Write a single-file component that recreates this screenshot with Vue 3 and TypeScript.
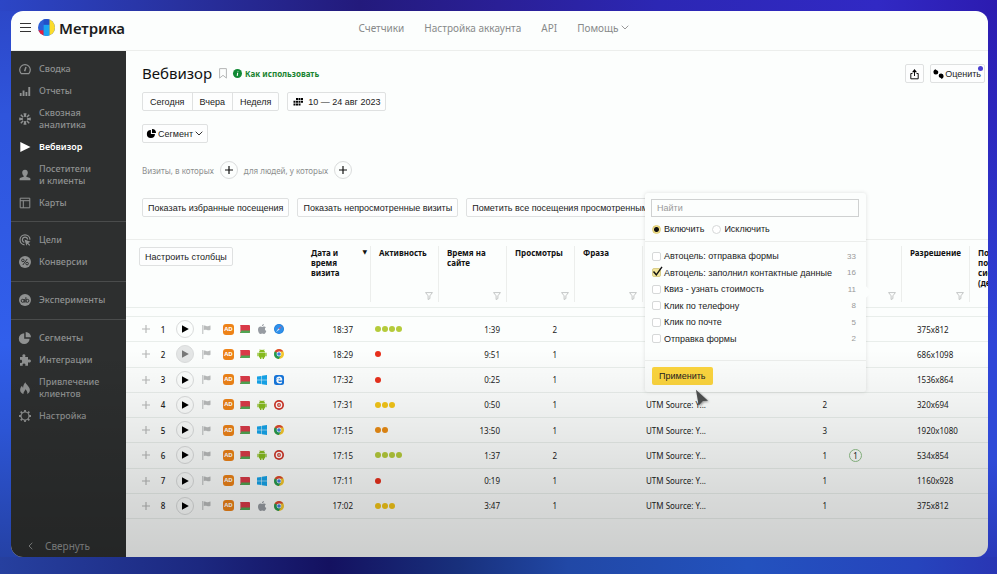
<script setup lang="ts">
import { ref } from 'vue'

type Os = 'apple' | 'android' | 'windows'
type Browser = 'safari' | 'chrome' | 'edge' | 'opera'

interface NavItem {
  label: string
  icon: string
}

interface Visit {
  id: number
  time: string
  os: Os
  browser: Browser
  activity: number
  color: string
  duration: string
  views: number
  source: string
  visits: string
  goals: string
  resolution: string
}

interface Goal {
  name: string
  count: number
}

const menu: NavItem[][] = [
  [
    { label: 'Сводка', icon: 'gauge' },
    { label: 'Отчеты', icon: 'bars' },
    { label: 'Сквозная\nаналитика', icon: 'burst' },
    { label: 'Вебвизор', icon: 'play' },
    { label: 'Посетители\nи клиенты', icon: 'person' },
    { label: 'Карты', icon: 'layout' },
  ],
  [
    { label: 'Цели', icon: 'target' },
    { label: 'Конверсии', icon: 'percent' },
  ],
  [{ label: 'Эксперименты', icon: 'ab' }],
  [
    { label: 'Сегменты', icon: 'pie' },
    { label: 'Интеграции', icon: 'puzzle' },
    { label: 'Привлечение\nклиентов', icon: 'fire' },
    { label: 'Настройка', icon: 'gear' },
  ],
]
const current = 'Вебвизор'

const green = '#b5cb3b'
const red = '#e8301c'
const yellow = '#f3c518'
const orange = '#ea8c14'

const visits: Visit[] = [
  { id: 1, time: '18:37', os: 'apple', browser: 'safari', activity: 4, color: green, duration: '1:39', views: 2, source: '', visits: '', goals: '', resolution: '375x812' },
  { id: 2, time: '18:29', os: 'android', browser: 'chrome', activity: 1, color: red, duration: '9:51', views: 1, source: '', visits: '', goals: '', resolution: '686x1098' },
  { id: 3, time: '17:32', os: 'windows', browser: 'edge', activity: 1, color: red, duration: '0:25', views: 1, source: '', visits: '', goals: '', resolution: '1536x864' },
  { id: 4, time: '17:31', os: 'android', browser: 'opera', activity: 3, color: yellow, duration: '0:50', views: 1, source: 'UTM Source: Y...', visits: '2', goals: '', resolution: '320x694' },
  { id: 5, time: '17:15', os: 'windows', browser: 'chrome', activity: 2, color: orange, duration: '13:50', views: 1, source: 'UTM Source: Y...', visits: '3', goals: '', resolution: '1920x1080' },
  { id: 6, time: '17:15', os: 'android', browser: 'opera', activity: 4, color: green, duration: '1:37', views: 2, source: 'UTM Source: Y...', visits: '1', goals: '1', resolution: '534x854' },
  { id: 7, time: '17:11', os: 'windows', browser: 'chrome', activity: 1, color: red, duration: '0:19', views: 1, source: 'UTM Source: Y...', visits: '1', goals: '', resolution: '1160x928' },
  { id: 8, time: '17:02', os: 'apple', browser: 'chrome', activity: 3, color: yellow, duration: '3:47', views: 1, source: 'UTM Source: Y...', visits: '1', goals: '', resolution: '375x812' },
]
const watched = 2

const columns = [
  { label: 'Дата и\nвремя\nвизита', filter: false, sorted: true },
  { label: 'Активность', filter: true },
  { label: 'Время на\nсайте', filter: true },
  { label: 'Просмотры', filter: true },
  { label: 'Фраза', filter: true },
  { label: '', filter: false },
  { label: '', filter: false },
  { label: '', filter: true },
  { label: 'Разрешение', filter: true },
  { label: 'Последняя\nпоисковая\nсистема\n(детально)', filter: false },
]

const goals: Goal[] = [
  { name: 'Автоцель: отправка формы', count: 33 },
  { name: 'Автоцель: заполнил контактные данные', count: 16 },
  { name: 'Квиз - узнать стоимость', count: 11 },
  { name: 'Клик по телефону', count: 8 },
  { name: 'Клик по почте', count: 5 },
  { name: 'Отправка формы', count: 2 },
]
const checked = ref<string[]>(['Автоцель: заполнил контактные данные'])
const mode = ref('include')
const query = ref('')
</script>

<template>
  <div class="backdrop">
    <div class="window">
      <header class="top">
        <div class="brand">
          <button class="burger" type="button" aria-label="Меню"><i></i><i></i><i></i></button>
          <svg class="logo" viewBox="0 0 18 18" aria-hidden="true">
            <defs><clipPath id="disc"><circle cx="9" cy="9" r="9" /></clipPath></defs>
            <g clip-path="url(#disc)">
              <rect width="18" height="18" fill="#2c5fd6" />
              <rect x="12" width="6" height="18" fill="#fbdc2c" />
              <rect y="12" width="6" height="6" fill="#e8203c" />
              <rect x="6" y="6" width="6" height="12" fill="#19a4f2" />
              <rect x="6" width="6" height="6" fill="#2350c8" />
            </g>
          </svg>
          <span class="name">Метрика</span>
        </div>
        <nav class="links">
          <a href="#">Счетчики</a>
          <a href="#">Настройка аккаунта</a>
          <a href="#">API</a>
          <a href="#">Помощь<svg class="chev" viewBox="0 0 8 5"><path d="M.7.7 4 4 7.300.7" /></svg></a>
        </nav>
      </header>

      <div class="body">
        <aside class="side">
          <ul v-for="(group, g) in menu" :key="g">
            <li v-for="item in group" :key="item.label">
              <a href="#" :class="{ active: item.label === current }">
                <svg class="mi" viewBox="0 0 12 12" aria-hidden="true">
                  <g v-if="item.icon === 'gauge'" class="ln"><path d="M2.200 10.600A5.300 5.300 0 1 1 9.800 10.600Z" stroke-width="1.200" /><path d="M5.600 8.200 7 4" stroke-width="1.500" /></g>
                  <g v-else-if="item.icon === 'bars'"><path d="M.8 8h1.800v3H.8zM3.600 5.500h1.900V11H3.600zM6.500 7h1.800v4H6.500zM9.300 2h1.900v9H9.300z" /></g>
                  <g v-else-if="item.icon === 'burst'"><path d="M4.500.2h3L6.800 4H5.200zM4.500 11.800h3L6.800 8H5.200zM.2 4.500v3L4 6.800V5.200zM11.800 4.500v3L8 6.800V5.200z" /><path class="ln" d="M1.800 1.800l2.400 2.400M7.800 7.800l2.400 2.400M10.200 1.800 7.800 4.200M4.200 7.800l-2.400 2.400" stroke-width="1.500" /></g>
                  <path v-else-if="item.icon === 'play'" d="M1.300 1 11.500 6 1.300 11z" />
                  <path v-else-if="item.icon === 'person'" d="M6 .7c1.800 0 2.800 1.200 2.800 2.900 0 1.500-.7 2.700-1.500 3.300v.8l3.100 1c.7.2 1 .7 1 1.400v1.200H.6v-1.200c0-.7.3-1.200 1-1.400l3.100-1v-.8C3.900 6.300 3.200 5.100 3.200 3.600 3.200 1.900 4.200.7 6 .7z" />
                  <g v-else-if="item.icon === 'layout'" class="ln"><path d="M1.200 1.200h9.600v9.600H1.200zM1.200 3.700h9.600M4.300 3.700v7.100" /></g>
                  <g v-else-if="item.icon === 'target'"><g class="ln"><path d="M5.500 10.800A5 5 0 1 1 11 5.600" stroke-width="1.200" /><path d="M5.300 8.300A2.600 2.600 0 1 1 8.600 5.500" stroke-width="1.200" /></g><path d="m5.500 5.500 6 2.300-2.300 1.100 2 2-.9.900-2-2-.9 2z" /></g>
                  <g v-else-if="item.icon === 'percent'"><circle cx="6" cy="6" r="6" /><g class="cut"><circle cx="3.900" cy="4.400" r="1.300" /><circle cx="8.100" cy="7.600" r="1.300" /><path d="M8.200 3 3.800 9" /></g></g>
                  <g v-else-if="item.icon === 'ab'"><circle cx="6" cy="6" r="6" /><g class="cut"><circle cx="3.700" cy="6.800" r="1.500" /><path d="M5.300 5v3.600M6.900 3.200v5.400" /><circle cx="8.400" cy="6.800" r="1.500" /></g></g>
                  <g v-else-if="item.icon === 'pie'"><path d="M5.200 1.300v5.500h5.400A5.400 5.400 0 1 1 5.200 1.300z" /><path d="M6.700 0A5.300 5.300 0 0 1 12 5.300H6.700z" /></g>
                  <path v-else-if="item.icon === 'puzzle'" d="M1 3h2.700C3 1.500 3.500.2 4.900.2S6.800 1.500 6.100 3H9v2.800c1.500-.7 2.900-.2 2.900 1.200S10.500 8.900 9 8.200v3.600H6.200c.6-1.200.1-2.200-1.200-2.200s-1.800 1-1.200 2.200H1V8.700c1.300.6 2.100 0 2.100-1.300S2.300 5.500 1 6z" />
                  <path v-else-if="item.icon === 'fire'" d="M6.400.2C7 2.600 10.900 4.500 10.900 8c0 2-1.100 3.300-2.700 3.900.6-1.700-.4-3.300-1.900-4.600C6 9 4.500 9.800 4.400 11.900 2.600 11.500 1.100 10 1.100 8c0-1.800.9-3.200 2-4.200.1.900.4 1.500 1 1.900C4.200 3.700 4.900 1.600 6.400.2z" />
                  <g v-else class="ln"><circle cx="6" cy="6" r="4" stroke-width="1.200" /><path d="M6 0v2M6 10v2M0 6h2M10 6h2M1.700 1.700l1.400 1.400M8.900 8.900l1.400 1.400M10.300 1.700 8.900 3.100M3.100 8.900l-1.400 1.400" stroke-width="1.800" /></g>
                </svg>
                <span>{{ item.label }}</span>
              </a>
            </li>
          </ul>
          <button class="collapse" type="button"><svg viewBox="0 0 5 8"><path d="M4.300.8 1 4l3.300 3.200" /></svg>Свернуть</button>
        </aside>

        <main class="main">
          <section class="controls">
            <div class="headline">
              <h1>Вебвизор</h1>
              <svg class="mark" viewBox="0 0 8 11"><path d="M.6.6h6.800v9.500L4 7.300.6 10.100z" /></svg>
              <a class="help" href="#"><svg viewBox="0 0 10 10"><circle cx="5" cy="5" r="5" /><path d="M5.200 4.200 4.700 7.700M5.500 2.100v.8" /></svg>Как использовать</a>
              <div class="tools">
                <button class="btn icon" type="button" aria-label="Экспорт"><svg viewBox="0 0 9 11"><path d="M2.500 4.500H.8v5.300h7.400V4.500H6.500M4.500 7V2" /><path class="fill" d="M4.500 0 7 3.200H2z" /></svg></button>
                <button class="btn rate" type="button"><svg viewBox="0 0 11 10"><path d="M3.200.2 2.800 1c1.200-.2 2.500.8 2.500 2.200A2.300 2.300 0 0 1 3 5.500 2.500 2.500 0 0 1 .4 3C.4 1.400 1.700.2 3.200.2zM8 9.800l.2-.9C6.800 9 5.700 8 5.700 6.700A2.300 2.300 0 0 1 8 4.400a2.500 2.500 0 0 1 2.600 2.500C10.600 8.500 9.500 9.800 8 9.800z" /></svg>Оценить<i class="badge"></i></button>
              </div>
            </div>
            <div class="periods">
              <div class="seg">
                <button type="button">Сегодня</button><button type="button">Вчера</button><button type="button">Неделя</button>
              </div>
              <button class="btn date" type="button"><svg viewBox="0 0 10 8"><path d="M3 0h2v2H3zM5.500 0h2v2h-2zM8 0h2v2H8zM.5 2.700h2v2h-2zM3 2.700h2v2H3zM5.500 2.700h2v2h-2zM8 2.700h2v2H8zM.5 5.400h2v2h-2zM3 5.400h2v2H3zM5.500 5.400h2v2h-2z" /></svg>10 — 24 авг 2023</button>
            </div>
            <button class="btn segment" type="button"><svg class="pie" viewBox="0 0 12 12"><path d="M5.200 1.300v5.500h5.400A5.400 5.400 0 1 1 5.200 1.300z" /><path d="M6.700 0A5.300 5.300 0 0 1 12 5.300H6.700z" /></svg>Сегмент<svg class="chev dark" viewBox="0 0 8 5"><path d="M.7.7 4 4 7.300.7" /></svg></button>
            <div class="cond">
              <span>Визиты, в которых</span><button class="round" type="button" aria-label="Добавить условие визита"><svg viewBox="0 0 8 8"><path d="M4 0v8M0 4h8" /></svg></button>
              <span>для людей, у которых</span><button class="round" type="button" aria-label="Добавить условие посетителя"><svg viewBox="0 0 8 8"><path d="M4 0v8M0 4h8" /></svg></button>
            </div>
            <div class="actions">
              <button class="btn" type="button">Показать избранные посещения</button>
              <button class="btn" type="button">Показать непросмотренные визиты</button>
              <button class="btn" type="button">Пометить все посещения просмотренными</button>
            </div>
          </section>

          <table class="grid">
            <colgroup>
              <col class="c-lead" /><col class="c" /><col class="c" /><col class="c" /><col class="c" /><col class="c" /><col class="c-source" /><col class="c" /><col class="c" /><col class="c" /><col />
            </colgroup>
            <thead>
              <tr>
                <th class="lead"><button class="btn" type="button">Настроить столбцы</button></th>
                <th v-for="(c, i) in columns" :key="i"><div class="h" :class="{ sep: i < columns.length - 1 }">{{ c.label }}<i v-if="c.sorted" class="sort">▼</i><svg v-if="c.filter" class="funnel" viewBox="0 0 8 8"><path d="M.6.6h6.800L4.900 3.800v2.800l-1.800.9V3.800z" /></svg></div></th>
              </tr>
            </thead>
            <tbody>
              <tr class="gap"><td colspan="11"></td></tr>
              <tr v-for="v in visits" :key="v.id">
                <td>
                  <div class="rowlead">
                    <svg class="plus" viewBox="0 0 7 7"><path d="M3.500 0v7M0 3.500h7" /></svg>
                    <span class="num">{{ v.id }}</span>
                    <button class="round" :class="{ seen: v.id === watched }" type="button" aria-label="Воспроизвести"><svg viewBox="0 0 8 8"><path class="fill" d="M1 .3 7.800 4 1 7.700z" /></svg></button>
                    <svg class="flag" viewBox="0 0 9 9"><path d="M.3 0h1v9h-1zM1.800.7C3.500-.2 4.500 1.600 6 1.200c1-.2 1.800-.5 2.500-.7v4.300c-1.500.8-2.500.5-3.500.2-1.200-.4-2-.5-3.200.2z" /></svg>
                    <span class="ad">AD</span>
                    <svg class="by" viewBox="0 0 10 8"><rect width="10" height="8" rx="1" fill="#d93a48" /><path d="M0 5.500h10V7a1 1 0 0 1-1 1H1a1 1 0 0 1-1-1z" fill="#4fa653" /><path d="M0 1h1v6H0z" fill="#e58a90" /></svg>
                    <svg class="os" viewBox="0 0 10 10">
                      <path v-if="v.os === 'apple'" fill="#979ca2" d="M6.900 0c.1 1.200-.9 2.300-2 2.300C4.800 1.200 5.800.1 6.900 0zM5.200 2.900c.5 0 1-.5 1.900-.5.8 0 1.400.3 1.800.9-1.500.9-1.300 3 .4 3.700C8.900 8.200 8 10 7 10c-.7 0-1-.4-1.700-.4-.8 0-1.100.4-1.700.4C2.300 10 1 7.700 1 5.700c0-2.100 1.300-3.200 2.500-3.200.8 0 1.300.4 1.700.4z" />
                      <g v-else-if="v.os === 'android'" fill="#86bb1e"><path d="M2 3.300C2.100 1.600 3.300.8 5 .8s2.900.8 3 2.500zM2 3.700h6v4.200c0 .4-.3.600-.6.600H2.600c-.3 0-.6-.2-.6-.6z" /><path d="M.4 3.800h1.300v3.400H.4zM8.300 3.800h1.300v3.400H8.300zM3 8h1.400v2H3zM5.600 8H7v2H5.600z" /><path d="m2.700 0 1 1.500M7.300 0l-1 1.500" stroke="#86bb1e" stroke-width=".5" /></g>
                      <path v-else fill="#16a4ea" d="M0 1.500 4.400.9v3.800H0zM4.900.8 10 0v4.700H4.900zM0 5.200h4.400v3.900L0 8.500zM4.900 5.200H10V10l-5.100-.8z" />
                    </svg>
                    <svg class="os" viewBox="0 0 10 10">
                      <g v-if="v.browser === 'safari'"><circle cx="5" cy="5" r="5" fill="#1e7fdc" /><circle cx="5" cy="5" r="4.200" fill="#2f90ea" /><path d="M8.200 1.800 5.600 5.600 4.400 4.400z" fill="#c9607a" /><path d="M1.800 8.200 4.400 4.400l1.200 1.200z" fill="#cfe6fb" /></g>
                      <g v-else-if="v.browser === 'chrome'"><circle cx="5" cy="5" r="5" fill="#f5c72c" /><path d="M5 5 .7 2.500A5 5 0 0 1 9.300 2.500H5z" fill="#dc4437" /><path d="M.7 2.500A5 5 0 0 0 4.800 10L7.200 6z M5 5 .7 2.500 4 8z" fill="#229a56" /><circle cx="5" cy="5" r="2.400" fill="#fff" /><circle cx="5" cy="5" r="1.800" fill="#3f7ee0" /></g>
                      <g v-else-if="v.browser === 'edge'"><rect width="10" height="10" rx="2.500" fill="#1677dd" /><path d="M1.800 4.500C2.300 2.500 3.600 1.600 5.200 1.600c2 0 3.200 1.400 3.100 3.800H4.200c.1 1.800 2.500 1.900 3.700 1.100v1.500C5.300 9.200 2.300 8.300 2.300 5.600c0-1 .6-1.900 1.600-2.300-.9 0-1.500.5-2.100 1.200zM4.300 4.300h2.100c0-1.500-2-1.500-2.100 0z" fill="#fff" /></g>
                      <g v-else><circle cx="5" cy="5" r="5" fill="#cf3325" /><circle cx="5" cy="5" r="3.300" fill="#fff" /><circle cx="5" cy="5" r="1.900" fill="#cf3325" /><rect x="4.600" y="3.900" width=".9" height="2.200" fill="#fff" /></g>
                    </svg>
                  </div>
                </td>
                <td class="r date-cell">{{ v.time }}</td>
                <td><div class="dots"><i v-for="n in v.activity" :key="n" :style="{ background: v.color }"></i></div></td>
                <td class="r">{{ v.duration }}</td>
                <td class="r date-cell">{{ v.views }}</td>
                <td></td>
                <td class="src">{{ v.source }}</td>
                <td class="r">{{ v.visits }}</td>
                <td class="goal"><span v-if="v.goals">{{ v.goals }}</span></td>
                <td class="res">{{ v.resolution }}</td>
                <td></td>
              </tr>
            </tbody>
          </table>

          <form class="popup" @submit.prevent>
            <div class="pad">
              <input v-model="query" class="search" type="text" placeholder="Найти" aria-label="Найти" />
              <div class="modes">
                <label><input v-model="mode" type="radio" value="include" />Включить</label>
                <label><input v-model="mode" type="radio" value="exclude" />Исключить</label>
              </div>
            </div>
            <ul class="goals">
              <li v-for="g in goals" :key="g.name">
                <label><input v-model="checked" type="checkbox" :value="g.name" /><svg class="tick" viewBox="0 0 11 11"><path d="M1.500 5.500 4.300 8.800 10 .8" /></svg>{{ g.name }}</label>
                <span>{{ g.count }}</span>
              </li>
            </ul>
            <div class="foot"><button class="apply" type="submit">Применить</button></div>
            <svg class="cursor" viewBox="0 0 14 18" aria-hidden="true"><path d="M1 0 14 12l-5.500.3L4 17z" /></svg>
          </form>
        </main>
      </div>
    </div>
  </div>
</template>

<style>
body {
  background: #2b3fc9;
}
</style>

<style scoped>
* {
  box-sizing: border-box;
}
.backdrop {
  min-height: 100vh;
  padding: 11px 9px 17px 11px;
  display: flex;
  font-family: 'Noto Sans', sans-serif;
  font-size: 9px;
  color: #222;
  background:
    linear-gradient(90deg, #2c46c6, #28319f 18%, #231a7c 36%, #2a1f96 50%, #2c27b4 66%, #3129c4 88%, #2c1bb0) top / 100% 11px no-repeat,
    linear-gradient(90deg, #26409f, #1c2880 20%, #141160 33%, #18307c 46%, #2148a6 57%, #2352be 75%, #2644bd 92%, #2936b4) bottom / 100% 17px no-repeat,
    linear-gradient(#2c46c6, #2f55dc 20%, #315fec 60%, #2c55d4 75%, #243f9f) left / 50% 100% no-repeat,
    linear-gradient(#2c1bb0, #2d26bd 20%, #2f45d8 60%, #2f4bd8 80%, #2936b4) right / 50% 100% no-repeat;
}
.window {
  position: relative;
  flex: 1;
  min-width: 0;
  display: flex;
  flex-direction: column;
  overflow: hidden;
  border-radius: 12px;
  background: #fcfefd;
}
.window::after {
  content: '';
  position: absolute;
  inset: 0;
  pointer-events: none;
  background: linear-gradient(transparent 62%, rgba(0, 0, 0, 0.05) 72%, rgba(0, 0, 0, 0.15) 90%, rgba(0, 0, 0, 0.19));
}
button,
input {
  font: inherit;
  color: inherit;
  margin: 0;
}
button {
  cursor: pointer;
}
a {
  color: inherit;
  text-decoration: none;
}
ul {
  list-style: none;
  margin: 0;
  padding: 0;
}
svg {
  display: block;
  flex: none;
  overflow: visible;
}
.top {
  height: 40px;
  display: grid;
  grid-template-columns: 1fr auto 1fr;
  align-items: center;
  padding: 0 20px 6px 9px;
  border-bottom: 1px solid #eceeec;
}
.brand {
  display: flex;
  align-items: center;
}
.burger {
  width: 11px;
  padding: 0;
  border: 0;
  background: none;
  display: grid;
  gap: 3px;
}
.burger i {
  height: 1px;
  background: #333;
}
.logo {
  width: 17px;
  height: 17px;
  margin: 0 4px 0 7px;
}
.name {
  font-size: 15px;
  line-height: 20px;
  font-weight: 600;
  color: #1c1c20;
}
.links {
  display: flex;
  gap: 20px;
  font-size: 10px;
  color: #888a8a;
}
.links a {
  display: flex;
  align-items: center;
  gap: 3px;
}
.chev {
  width: 8px;
  height: 5px;
}
.chev path {
  fill: none;
  stroke: #999;
  stroke-width: 1;
}
.chev.dark path {
  stroke: #333;
}
.body {
  flex: 1;
  display: flex;
}
.side {
  width: 115px;
  flex: none;
  display: flex;
  flex-direction: column;
  background: #2d2f2f;
  color: #8f9191;
}
.side ul {
  padding: 7px 0;
}
.side ul + ul {
  padding-bottom: 8px;
  border-top: 1px solid #4a4c4c;
}
.side li a {
  display: flex;
  align-items: center;
  gap: 8px;
  padding: 5px 8px;
  font-weight: 500;
  line-height: 12px;
  white-space: pre;
}
.side li a.active {
  color: #fff;
  font-weight: 600;
}
.mi {
  width: 12px;
  height: 12px;
  fill: currentColor;
}
.ln {
  fill: none;
  stroke: currentColor;
}
.cut {
  fill: none;
  stroke: #2d2f2f;
}
.collapse {
  margin-top: auto;
  display: flex;
  align-items: center;
  gap: 12px;
  padding: 5px 17px;
  border: 0;
  background: none;
  font-size: 10px;
  line-height: 12px;
}
.collapse svg {
  width: 5px;
  height: 8px;
  fill: none;
  stroke: currentColor;
}
.main {
  position: relative;
  flex: 1;
  min-width: 0;
}
.controls {
  display: flex;
  flex-direction: column;
  align-items: flex-start;
  padding: 13px 3px 22px 16px;
  white-space: nowrap;
}
.headline {
  align-self: stretch;
  display: flex;
  align-items: center;
  height: 19px;
}
h1 {
  margin: 0;
  font-size: 15px;
  line-height: 19px;
  font-weight: 400;
  color: #111;
}
.mark {
  width: 8px;
  height: 11px;
  margin: 0 6px 0 7px;
  fill: none;
  stroke: #b5b7b7;
}
.help {
  display: flex;
  align-items: center;
  gap: 3px;
  font-size: 8px;
  font-weight: 700;
  color: #188330;
}
.help svg {
  width: 9px;
  height: 9px;
  fill: #118a35;
}
.help path {
  stroke: #fff;
  stroke-width: 1.2;
}
.tools {
  margin-left: auto;
  display: flex;
  gap: 6px;
}
.btn,
.seg {
  height: 19px;
  border: 1px solid #dfe1e1;
  border-radius: 2px;
  background: #fdfefe;
  font-family: 'Liberation Sans', Arial, sans-serif;
}
.btn {
  display: flex;
  align-items: center;
  padding: 0 5px;
}
.icon {
  padding: 2px 4px 0;
}
.icon svg {
  width: 9px;
  height: 11px;
  fill: none;
  stroke: #111;
}
.fill {
  fill: #000;
  stroke: none;
}
.rate {
  position: relative;
  padding: 0 3px 0 2px;
  gap: 1px;
}
.rate svg {
  width: 11px;
  height: 10px;
}
.badge {
  position: absolute;
  top: 1px;
  right: 1px;
  width: 5px;
  height: 5px;
  border-radius: 50%;
  background: #4a3fd0;
}
.periods {
  display: flex;
  gap: 8px;
  margin-top: 9px;
}
.seg {
  display: flex;
}
.seg button {
  border: 0;
  background: none;
  padding: 0 7px;
}
.seg button + button {
  border-left: 1px solid #dfe1e1;
}
.date {
  gap: 5px;
}
.date svg {
  width: 10px;
  height: 8px;
}
.segment {
  margin-top: 13px;
  padding: 0 4px;
  gap: 2px;
}
.pie {
  width: 9px;
  height: 9px;
}
.cond {
  display: flex;
  align-items: center;
  gap: 6px;
  margin-top: 18px;
  font-size: 8px;
  color: #8c8e8e;
}
.round {
  width: 18px;
  height: 18px;
  padding: 0;
  display: grid;
  place-items: center;
  border: 1px solid #dadcdc;
  border-radius: 50%;
  background: none;
}
.round svg {
  width: 8px;
  height: 8px;
  stroke: #111;
  stroke-width: 1.2;
}
.actions {
  display: flex;
  gap: 8px;
  margin-top: 19px;
}
.grid {
  width: 100%;
  height: 280px;
  table-layout: fixed;
  border-collapse: separate;
  border-spacing: 0;
  border-top: 1px solid #eceeec;
  font-size: 8px;
}
.grid .btn {
  font-size: 9px;
}
.c-lead {
  width: 177px;
}
.c {
  width: 68px;
}
.c-source {
  width: 123px;
}
th,
td {
  padding: 0;
  border-bottom: 1px solid rgba(120, 140, 130, 0.14);
}
th {
  height: 68px;
  vertical-align: top;
  text-align: left;
}
.gap td {
  height: 9px;
}
.lead {
  padding: 7px 0 0 13px;
  font-weight: 400;
}
.h {
  position: relative;
  height: 56px;
  margin-top: 6px;
  padding: 2px 0 0 8px;
  line-height: 10px;
  font-weight: 700;
  color: #111;
  white-space: pre;
}
.sep {
  border-right: 1px solid #eceeec;
}
.sort {
  position: absolute;
  top: 1px;
  right: 3px;
  font-style: normal;
  font-size: 6px;
  font-family: 'DejaVu Sans', sans-serif;
}
.funnel {
  position: absolute;
  right: 5px;
  bottom: 2px;
  width: 8px;
  height: 8px;
  fill: none;
  stroke: #b5b8b8;
  stroke-width: 0.8;
}
.rowlead {
  display: flex;
  align-items: center;
  padding-left: 16px;
}
.plus {
  width: 8px;
  height: 8px;
  stroke: #b4b6b6;
}
.num {
  width: 26px;
  font-weight: 500;
  text-align: center;
}
.rowlead .round {
  margin: 0 8px 0 0;
}
.seen {
  background: #e4e6e6;
}
.seen .fill {
  fill: #777;
}
.flag {
  width: 9px;
  height: 9px;
  fill: #b9bbbb;
}
.ad {
  width: 11px;
  height: 11px;
  margin: 0 6px 0 12px;
  border-radius: 3px;
  background: #ee8318;
  color: #fff;
  font-size: 6px;
  line-height: 11px;
  font-weight: 700;
  text-align: center;
}
.by {
  width: 10px;
  height: 8px;
}
.os {
  width: 10px;
  height: 10px;
  margin-left: 7px;
}
.r {
  text-align: right;
  padding-right: 7px;
}
.date-cell {
  padding-right: 18px;
}
.dots {
  display: flex;
  gap: 1px;
  padding-left: 4px;
}
.dots i {
  width: 6px;
  height: 6px;
  border-radius: 50%;
}
.src {
  padding-left: 3px;
}
.goal span {
  display: block;
  width: 13px;
  margin-left: 15px;
  border: 1px solid #8fc088;
  border-radius: 50%;
  line-height: 11px;
  text-align: center;
}
.res {
  padding-left: 15px;
}
.popup {
  position: absolute;
  top: 142px;
  left: 519px;
  width: 221px;
  border-radius: 3px;
  background: #fcfefd;
  box-shadow: 0 0 4px rgba(0, 0, 0, 0.12);
  font-family: 'Liberation Sans', Arial, sans-serif;
}
.popup::after {
  content: '';
  position: absolute;
  right: -4px;
  top: 95px;
  width: 8px;
  height: 8px;
  background: #fcfefd;
  transform: rotate(45deg);
}
.pad {
  padding: 6px 7px 6px 6px;
}
.search {
  display: block;
  width: 100%;
  height: 18px;
  padding: 0 5px;
  border: 1px solid #cfd1d1;
  background: none;
}
.search::placeholder {
  color: #999;
}
.modes {
  display: flex;
  gap: 8px;
  padding: 6px 2px 0 1px;
}
label {
  display: flex;
  align-items: center;
  gap: 3px;
  line-height: 12px;
}
.popup [type='radio'],
.popup [type='checkbox'] {
  appearance: none;
  width: 9px;
  height: 9px;
  border: 1px solid #d6d8d8;
  border-radius: 2px;
  background: #fff;
}
.popup [type='radio'] {
  border-radius: 50%;
}
.popup [type='radio']:checked {
  border-color: #dccb74;
  background: radial-gradient(#111 0 2px, #f2e08a 3px);
}
.popup [type='checkbox']:checked {
  background: #f2e59a;
  border-color: #d8cd8a;
}
.goals {
  display: grid;
  grid-auto-rows: 1fr;
  height: 120px;
  padding: 6px 10px 13px 7px;
  border: solid #eceeec;
  border-width: 1px 0;
}
.goals li {
  display: flex;
  align-items: center;
  justify-content: space-between;
}
.goals label {
  position: relative;
}
.goals span {
  font-size: 8px;
  color: #999;
}
.tick {
  position: absolute;
  left: 0;
  bottom: 2px;
  width: 11px;
  height: 11px;
  fill: none;
  stroke: #111;
  stroke-width: 1.4;
  visibility: hidden;
}
:checked + .tick {
  visibility: visible;
}
.foot {
  padding: 6px 7px 7px;
}
.apply {
  height: 18px;
  padding: 0 7px;
  border: 0;
  border-radius: 2px;
  background: #fcd53e;
}
.cursor {
  position: absolute;
  left: 50px;
  bottom: -15px;
  width: 13px;
  height: 18px;
  z-index: 1;
  fill: #4b4d4d;
  filter: drop-shadow(1px 1px 1px rgba(0, 0, 0, 0.4));
}
</style>
